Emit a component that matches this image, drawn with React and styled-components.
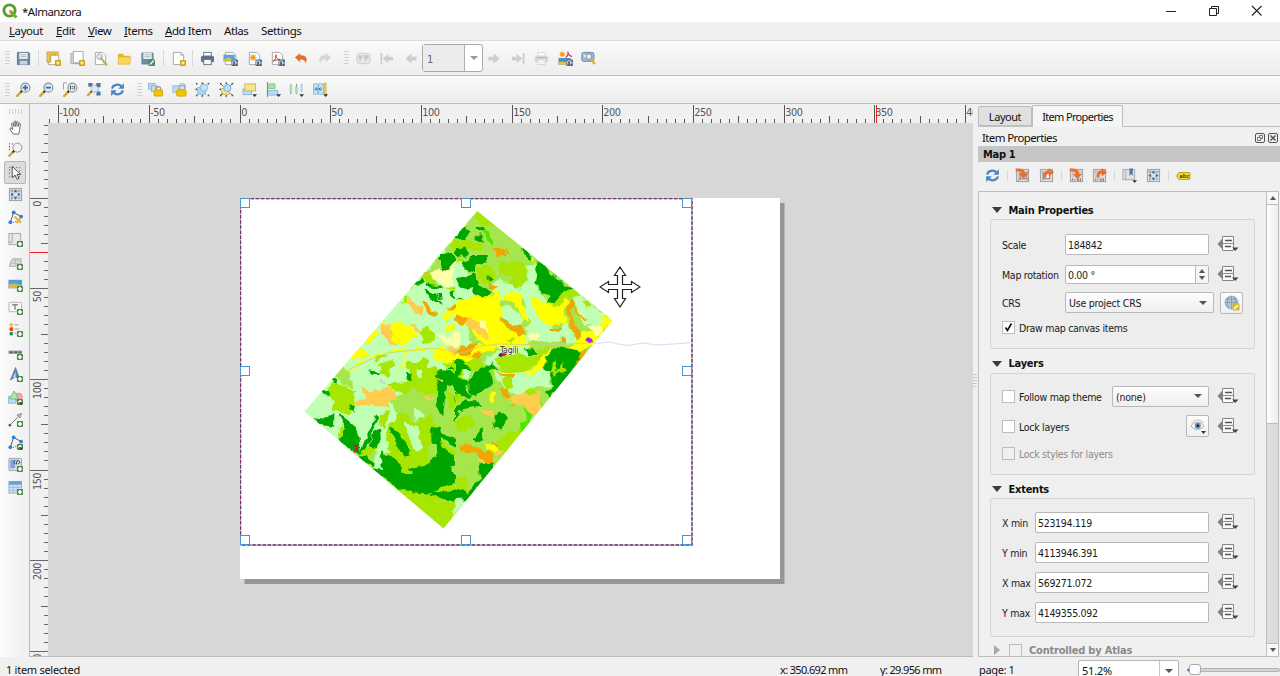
import React from 'react';
import styled, { createGlobalStyle, css } from 'styled-components';

const ui = '"Noto Sans", "Open Sans", sans-serif';
const panelFont = '"DejaVu Sans Condensed", "DejaVu Sans", sans-serif';

const Global = createGlobalStyle`
  html, body { margin: 0; padding: 0; height: 100%; overflow: hidden; }
  *, *::before, *::after { box-sizing: border-box; }
`;

const Window = styled.div`
  width: 1280px;
  height: 676px;
  display: flex;
  flex-direction: column;
  overflow: hidden;
  background: #f0f0f0;
  color: #111;
  font: 10.5px ${panelFont};
  white-space: nowrap;
`;

/* ---------- window chrome ---------- */
const TitleBar = styled.header`
  height: 22px;
  flex: none;
  display: flex;
  align-items: center;
  background: #fff;
  padding-left: 2px;
  font: 11.5px ${ui};
`;
const Title = styled.span`
  flex: 1;
  padding-left: 4px;
  letter-spacing: -0.5px;
`;
const WindowControls = styled.div`
  display: flex;
  width: 131px;
  height: 20px;
`;
const WindowButton = styled.div`
  width: 43px;
  display: flex;
  align-items: center;
  justify-content: center;
`;
const MenuBar = styled.nav`
  height: 19px;
  flex: none;
  display: flex;
  align-items: center;
  padding-bottom: 2px;
  border-bottom: 1px solid #dcdcdc;
  font: 11.5px ${ui};
`;
const MenuItem = styled.span`
  width: ${(p) => p.$w}px;
  letter-spacing: -0.42px;
  padding-left: 9px;
  &::first-letter { text-decoration: ${(p) => (p.$plain ? 'none' : 'underline')}; }
`;

/* ---------- toolbars ---------- */
const ToolBar = styled.div`
  height: ${(p) => p.$h}px;
  flex: none;
  display: flex;
  align-items: center;
  background: linear-gradient(#fafafa, #ededed);
  border-bottom: 1px solid #bdbdbd;
`;
const Tool = styled.div`
  width: 23.5px;
  height: 22px;
  flex: none;
  display: flex;
  align-items: center;
  justify-content: center;
  opacity: ${(p) => (p.$off ? 0.85 : 1)};
`;
const Separator = styled.div`
  width: ${(p) => p.$w || 7}px;
  height: ${(p) => p.$h || 16}px;
  flex: none;
  background: linear-gradient(#d8d8d8, #d8d8d8) center / 1px 100% no-repeat;
`;
const Grip = styled.div`
  width: ${(p) => p.$w}px;
  height: 16px;
  flex: none;
  &::before {
    content: '';
    display: block;
    width: 5px;
    height: 16px;
    margin-left: ${(p) => p.$m}px;
    background: radial-gradient(circle, #c4c4c4 0.7px, transparent 1px) 0 0 / 2.5px 3px;
  }
`;
const SideGrip = styled.div`
  width: 16px;
  height: 5px;
  margin: 5px 0 2px 8px;
  flex: none;
  background: radial-gradient(circle, #c4c4c4 0.7px, transparent 1px) 0 0 / 3px 2.5px;
`;
const PageCombo = styled.div`
  width: 61px;
  height: 28px;
  flex: none;
  display: flex;
  border: 1px solid #a9a9a9;
  border-radius: 3px;
  background: #fff;
  font-size: 11px;
  span {
    flex: 1;
    background: #ececec;
    border-right: 1px solid #b0b0b0;
    padding: 8px 0 0 4px;
    color: #5a6b80;
    line-height: 14px;
  }
`;
const ComboArrow = styled.i`
  width: ${(p) => p.$w || 17}px;
  display: flex;
  align-items: center;
  justify-content: center;
  &::before {
    content: '';
    border: 4px solid transparent;
    border-top: 4px solid ${(p) => p.$c || '#555'};
    border-bottom: 0;
  }
`;

/* ---------- body ---------- */
const Body = styled.div`
  height: 553px;
  flex: none;
  display: flex;
`;
const SideBar = styled.aside`
  width: 30px;
  flex: none;
  background: linear-gradient(90deg, #fbfbfb, #efefef);
  border-right: 1px solid #bcbcbc;
`;
const SideTool = styled.div`
  width: 22px;
  height: 22.5px;
  margin-left: 4px;
  display: flex;
  align-items: center;
  justify-content: center;
  ${(p) => p.$active && css`
    background: #dcdcdc;
    border: 1px solid #b4b4b4;
    border-radius: 2px;
  `}
`;
const View = styled.main`
  width: 943px;
  flex: none;
  display: flex;
  flex-direction: column;
  border-bottom: 1px solid #bcbcbc;
  svg { display: block; }
`;
const ViewRow = styled.div`
  display: flex;
  flex: 1;
  min-height: 0;
`;
const Canvas = styled.div`
  position: relative;
  flex: 1;
  overflow: hidden;
  background: #d7d7d7;
`;
const Paper = styled.div`
  position: absolute;
  left: 192px;
  top: 75px;
  width: 540px;
  height: 381px;
  background: #fff;
  box-shadow: 4.5px 5px 0 #969696;
`;
const MapItem = styled.div`
  position: absolute;
  left: 192px;
  top: 75px;
  width: 453px;
  height: 348px;
`;
const Handle = styled.div`
  position: absolute;
  left: ${(p) => p.$x}px;
  top: ${(p) => p.$y}px;
  width: 10px;
  height: 10px;
  background: #fff;
  border: 1px solid #4a96c8;
`;
const MoveCursor = styled.svg`
  position: absolute;
  left: 551px;
  top: 143px;
`;
const Splitter = styled.div`
  width: 5px;
  flex: none;
  display: flex;
  align-items: center;
  &::before {
    content: '';
    width: 4px;
    height: 16px;
    background: radial-gradient(circle, #c8c8c8 0.7px, transparent 1px) 0 0 / 2px 3px;
  }
`;

/* ---------- right panel ---------- */
const Panel = styled.aside`
  flex: 1;
  min-width: 0;
  display: flex;
  flex-direction: column;
`;
const Tabs = styled.div`
  height: 23px;
  flex: none;
  display: flex;
  align-items: flex-end;
  border-bottom: 1px solid #c2c2c2;
  font: 11px ${ui};
  letter-spacing: -0.65px;
`;
const Tab = styled.div`
  width: ${(p) => p.$w}px;
  height: ${(p) => (p.$active ? 22 : 20)}px;
  margin-bottom: ${(p) => (p.$active ? -1 : 0)}px;
  display: flex;
  align-items: center;
  justify-content: center;
  padding-bottom: ${(p) => (p.$active ? 1 : 0)}px;
  background: ${(p) => (p.$active ? '#f5f5f5' : '#e0e0e0')};
  border: 1px solid #bdbdbd;
  border-bottom: ${(p) => (p.$active ? 0 : 1)}px solid #bdbdbd;
  border-radius: 2px 2px 0 0;
  ${(p) => !p.$active && css`letter-spacing: -0.45px;`}
`;
const DockTitle = styled.div`
  height: 19px;
  flex: none;
  display: flex;
  align-items: center;
  gap: 3px;
  padding: 2px 2px 0 4px;
  font: 11.5px ${ui};
  letter-spacing: -0.62px;
  span { flex: 1; }
`;
const ItemName = styled.div`
  height: 16px;
  flex: none;
  background: #c6c6c6;
  padding-left: 5px;
  font: bold 11px/17px ${panelFont};
  letter-spacing: -0.3px;
`;
const PanelTools = styled.div`
  height: 29px;
  flex: none;
  display: flex;
  align-items: center;
  padding: 0 0 2px 3px;
`;
const ScrollArea = styled.div`
  flex: 1;
  min-height: 0;
  display: flex;
  border: 1px solid #bdbdbd;
  border-right: 0;
  margin-right: 1px;
`;
const ScrollContent = styled.div`
  width: 287px;
  flex: none;
  overflow: hidden;
  padding-left: 11px;
`;
const ScrollBar = styled.div`
  width: 14px;
  border: 1px solid #bdbdbd;
  border-width: 0 1px;
  background: #dcdcdc;
  display: flex;
  flex-direction: column;
  justify-content: space-between;
`;
const ScrollStep = styled.div`
  height: 13px;
  background: #f7f7f7;
  border: 0 solid #bdbdbd;
  border-${(p) => (p.$up ? 'bottom' : 'top')}-width: 1px;
  display: flex;
  align-items: center;
  justify-content: center;
  &::before {
    content: '';
    border: 3.5px solid transparent;
    border-${(p) => (p.$up ? 'bottom' : 'top')}: 4px solid #555;
    border-${(p) => (p.$up ? 'top' : 'bottom')}: 0;
  }
`;
const ScrollThumb = styled.div`
  height: 219px;
  margin-bottom: auto;
  background: linear-gradient(90deg, #fff, #ececec);
  border-bottom: 1px solid #bdbdbd;
`;
const SectionTitle = styled.div`
  height: ${(p) => p.$h}px;
  padding: ${(p) => p.$pt || 0}px 0 0 2px;
  display: flex;
  align-items: center;
  font: bold 11px ${panelFont};
  letter-spacing: ${(p) => (p.$off ? -0.2 : -0.25)}px;
  color: ${(p) => (p.$off ? '#8a8a8a' : '#111')};
`;
const Triangle = styled.i`
  width: ${(p) => (p.$closed ? 17 : 16.5)}px;
  flex: none;
  &::before {
    content: '';
    display: block;
    width: 0;
    border: 5px solid transparent;
    border-top: 6px solid #3c3c3c;
    border-bottom: 0;
    ${(p) => p.$closed && css`
      border: 5px solid transparent;
      border-left: 6px solid #a8a8a8;
      border-right: 0;
      margin-left: 2px;
    `}
  }
`;
const GroupBox = styled.div`
  width: 265px;
  height: ${(p) => p.$h}px;
  padding: ${(p) => p.$pt}px 0 0 11px;
  background: #ededed;
  border: 1px solid #d4d4d4;
  border-radius: 2px;
`;
const Row = styled.div`
  height: ${(p) => p.$h || 30}px;
  display: flex;
  align-items: center;
  color: ${(p) => (p.$off ? '#8c8c8c' : '#1a1a1a')};
`;
const Label = styled.span`
  width: ${(p) => p.$w}px;
  flex: none;
  padding-top: 1px;
  letter-spacing: -0.28px;
`;
const Field = styled.div`
  width: ${(p) => p.$w}px;
  height: ${(p) => p.$h || 21}px;
  flex: none;
  display: flex;
  align-items: stretch;
  background: ${(p) => (p.$button ? 'linear-gradient(#fdfdfd, #efefef)' : '#fff')};
  border: 1px solid #b9b9b9;
  border-radius: 2px;
  span {
    flex: 1;
    padding-left: ${(p) => (p.$button ? 3 : 2)}px;
    line-height: ${(p) => (p.$h || 21) - 1}px;
    letter-spacing: ${(p) => (p.$button ? -0.22 : -0.32)}px;
  }
`;
const Spin = styled.div`
  width: 13px;
  border-left: 1px solid #b9b9b9;
  background: #f5f5f5;
  display: flex;
  flex-direction: column;
  align-items: center;
  justify-content: center;
  gap: 3px;
  &::before, &::after { content: ''; border: 3.5px solid transparent; }
  &::before { border-bottom: 4px solid #555; border-top: 0; }
  &::after { border-top: 4px solid #555; border-bottom: 0; }
`;
const Check = styled.div`
  width: 13px;
  height: 13px;
  flex: none;
  margin-right: ${(p) => p.$gap || 4}px;
  background: ${(p) => (p.$off ? '#f0f0f0' : '#fff')};
  border: 1px solid #bdbdbd;
  svg { display: block; }
`;
const SquareButton = styled.div`
  width: 23px;
  height: 22px;
  flex: none;
  display: flex;
  align-items: center;
  justify-content: center;
  background: linear-gradient(#fdfdfd, #f0f0f0);
  border: 1px solid #b9b9b9;
  border-radius: 2px;
`;
const Gap = styled.div`
  width: ${(p) => p.$w}px;
  flex: none;
`;

/* ---------- status bar ---------- */
const StatusBar = styled.footer`
  height: 19px;
  flex: none;
  display: flex;
  align-items: flex-start;
  overflow: hidden;
  font: 11px/26px ${ui};
  span { flex: none; }
`;
const StatusText = styled.span`
  width: ${(p) => p.$w}px;
  padding-left: 6px;
  letter-spacing: ${(p) => p.$ls}px;
`;
const ZoomCombo = styled.div`
  width: 101px;
  height: 22px;
  margin-top: 3px;
  display: flex;
  background: #fff;
  border: 1px solid #b4b4b4;
  border-radius: 2px;
  span {
    flex: 1;
    padding-left: 3px;
    line-height: 19px;
    letter-spacing: -0.2px;
    border-right: 1px solid #c4c4c4;
  }
`;
const Slider = styled.div`
  width: 93px;
  height: 4px;
  margin: 11px 0 0 8px;
  background: linear-gradient(90deg, #1976d2 8px, #d4d4d4 8px);
  border: 1px solid #b4b4b4;
  border-left: 0;
  border-radius: 2px;
  &::before {
    content: '';
    display: block;
    width: 12px;
    height: 11px;
    margin: -5px 0 0 2px;
    background: #fdfdfd;
    border: 1px solid #a8a8a8;
    border-radius: 3px;
  }
`;

/* ---------- icons, 16 x 16 ---------- */
const plus = <g><rect x="9.500" y="9.500" width="6.500" height="6.500" rx="1" fill="#4d8a4b" /><path d="M12.750 10.600v4.400M10.550 12.800h4.400" stroke="#fff" strokeWidth="1.800" /></g>;
const star = <g><rect x="9.500" y="9.500" width="6.500" height="6.500" rx="1" fill="#c9a30f" /><path d="M12.750 10.400v4.700M10.400 12.750h4.700M11.200 11.200l3 3M14.200 11.200l-3 3" stroke="#fff6b8" strokeWidth=".8" /></g>;
const exp = <g><rect x="9" y="9" width="7" height="7" rx="1" fill="#4a6680" /><path d="M10.300 14.500v-4h3v4M13 12h2v2" stroke="#dbe6ef" strokeWidth=".9" fill="none" /></g>;
const sheet = <path d="M2.500 1.500h8l3 3v10h-11z" fill="#fff" stroke="#a6a6a6" />;
const grid = <g><rect x="1.500" y="1.500" width="13" height="13" fill="#dedede" stroke="#9c9c9c" /><path d="M4 2v12M2 4h12" stroke="#b4b4b4" strokeWidth=".8" /></g>;
const lens = (x) => <g><path d="M6 10 1.300 14.800" stroke="#d3a63a" strokeWidth="2.600" strokeLinecap="round" /><path d="M6.600 9.200 5 11" stroke="#222" strokeWidth="2" /><circle cx="10" cy="6" r="4.800" fill="#dce8f3" stroke="#8b9299" strokeWidth="1.200" />{x}</g>;
const arrowTip = <path d="M11 13h5l-2.500 3z" fill="#333" />;
const curve = (c) => <path d="M6.500 2v2.500C12.500 4 15 7 12.500 13.500 12 10.500 10 9 6.500 9.200V12L1 7z" fill={c} />;
const refresh = <g fill="none" stroke="#4a86c6" strokeWidth="2.400"><path d="M2.300 7C3 2.500 9.500 1.500 12.200 4.800M13.700 9C13 13.500 6.500 14.500 3.800 11.200" /><path d="M14.800 1.200v6h-6zM1.200 14.800v-6h6z" fill="#4a86c6" stroke="none" /></g>;
const lock = <g><path d="M8.500 9V7.500a2.500 2.500 0 0 1 5 0V9" stroke="#9a9a9a" strokeWidth="1.400" fill="none" /><rect x="6.500" y="8.500" width="9" height="6.500" rx="1" fill="#f2c500" stroke="#d4a800" /></g>;
const poly = <g><path d="M2.500 13 6 2.500l8 4.500" fill="none" stroke="#555" /><path d="M2.500 13c5 1 9-2 11.500-6" fill="none" stroke="#777" strokeDasharray="1.500 1" />{[[2.5, 13], [6, 2.5], [14, 7]].map(([x, y]) => <circle key={x} cx={x} cy={y} r="2" fill="#2f7be0" />)}</g>;
const printer = (c, d) => <g><rect x="4" y="1.500" width="8" height="4" fill="#fff" stroke={c} /><rect x="1" y="5" width="14" height="7" rx="2" fill={c} /><rect x="4" y="9" width="8" height="5.500" fill={d} stroke={c} /><path d="M3 7h10" stroke="#222" strokeOpacity=".2" /></g>;
const four = (c) => <g fill={c}><path d="M8 2.500 10 5.500H6zM8 13.500 6 10.500h4zM2.500 8l3-2v4zM13.500 8l-3 2V6z" /><path d="M3.500 3.500h2.500L3.500 6zM12.500 3.500V6L10 3.500zM3.500 12.500V10L6 12.500zM12.500 12.500H10l2.500-2.500z" opacity=".55" /></g>;
const importArrow = <path d="M.5.5C7 0 11 1.500 11 6h3L9 12 4 6h3C7 4.200 4.500 3.200 1 3.700z" fill="#ea6f30" />;
const exportArrow = <path d="M5 10.500C4.500 4.500 7 2.500 10.500 2.500V0L16 4.500 10.500 9V6C8.500 6 7.500 7.500 8 10.500z" fill="#ea6f30" />;
const dots = <g fill="#555">{[[1, 1], [13.5, 1], [1, 13.5], [13.5, 13.5], [7, 0.5], [7, 14], [0.5, 7]].map(([x, y]) => <rect key={`${x}_${y}`} x={x} y={y} width="1.700" height="1.700" />)}</g>;

const icons = {
  save: <g><path d="M1.500 1.500h12l1 1v12h-13z" fill="#6f8aa5" stroke="#61799a" /><rect x="3.500" y="2" width="9" height="6.500" fill="#e9eef2" /><path d="M5 4h6M5 6h6" stroke="#9aa" strokeWidth=".8" /><rect x="4" y="10.500" width="8" height="4" fill="#c9d3dc" /></g>,
  newLayout: <g>{sheet}<path d="M2 1h11v3.500H5V12H1V1z" fill="#e8c54d" stroke="#c0a040" strokeWidth=".8" /><path d="M4 5.500h1.500M4 8h1.500M4 10.500h1.500M7 3v1.500M10 3v1.500" stroke="#9c8024" strokeWidth=".7" />{star}</g>,
  duplicate: <g><path d="M1 2.500h10v11H1z" fill="#d6d6d6" stroke="#a6a6a6" /><path d="M3.500.500h10.500v12H3.500z" fill="#fff" stroke="#a6a6a6" />{star}</g>,
  manager: <g>{sheet}<circle cx="7" cy="6" r="3" fill="#e6e6e6" stroke="#aaa" /><path d="m8 7 5.500 6.500" stroke="#999" strokeWidth="1.600" /><path d="m11 11 4 4" stroke="#d6ac2f" strokeWidth="2.500" /></g>,
  folder: <g><path d="M1 3h5l1.500 2H14v9H1z" fill="#e4b52c" /><path d="M1.500 6.500H15L13.500 14H1z" fill="#f8d55d" stroke="#e0b53c" strokeWidth=".6" /></g>,
  saveAs: <g><path d="M1.500 1.500h12l1 1v12h-13z" fill="#6f8aa5" /><rect x="3.500" y="2" width="9" height="6.500" fill="#e9eef2" /><path d="M5 4h6M5 6h6" stroke="#9aa" strokeWidth=".8" /><rect x="9" y="9" width="7" height="7" rx="1" fill="#4d8a6b" /><path d="m10.500 14.500 4-4" stroke="#fff" strokeWidth="1.500" /></g>,
  addPage: <g>{sheet}<path d="M10.500 1.500v3h3" fill="none" stroke="#a6a6a6" />{star}</g>,
  print: printer('#5d7893', '#f4f7f9'),
  image: <g>{sheet}<rect x=".500" y="4" width="12" height="7" fill="#5ba3dd" /><path d="m.500 11 0-2 5-2 7 2.500V11z" fill="#d8bd45" />{exp}</g>,
  svg: <g>{sheet}<path d="M6.500 3.500v7M3 7h7M4 4.500l5 5M9 4.500l-5 5" stroke="#f49b1c" strokeWidth="1.300" />{exp}</g>,
  pdf: <g>{sheet}<path d="M3 11c2.500-1 4-4.500 3.500-7-1.200 0-.5 4.500 4.500 5.500-2-.5-5 0-8 1.500z" fill="none" stroke="#d42b2b" />{exp}</g>,
  undo: curve('#e5702c'),
  redo: <g transform="matrix(-1 0 0 1 16 0)">{curve('#d3d5d6')}</g>,
  atlas: <g><rect x="1" y="2.500" width="14" height="11" rx="3" fill="#e4e6e7" stroke="#c4c7ca" /><path d="M2.500 5.500 4 4.500l3 .500-.5 2.500L5 8.500l-.5 3L3.500 9zM8 4.500l5 0 .5 3-2 .5-1 3.500L9 8z" fill="#bcc0c3" /></g>,
  first: <path d="M1.500 2h2v12h-2zM15 6v4h-5v3L4 8l6-5v3z" fill="#c6c9cc" />,
  prev: <path d="M14.500 6v4H9v3.500L2.500 8 9 2.500V6z" fill="#c6c9cc" />,
  next: <path d="M1.500 6v4H7v3.500L13.500 8 7 2.500V6z" fill="#c6c9cc" />,
  last: <path d="M12.500 2h2v12h-2zM1 6v4h5v3l6-5-6-5v3z" fill="#c6c9cc" />,
  printOff: printer('#cfd1d3', '#f4f4f4'),
  exportAtlas: <g><path d="M4.500.500v6M1.500 3.500h6M2.500 1.500l4 4M6.500 1.500l-4 4" stroke="#f49b1c" strokeWidth="1.200" /><path d="M8 7c2-1 3-4 2.500-6.500C10.500 3 12 5 15 6" stroke="#e23a3a" strokeWidth="1.300" fill="none" /><rect x=".500" y="7.500" width="13" height="7" fill="#4a90cf" /><path d="M.5 11.500h13v3H.5z" fill="#e3c23e" />{exp}</g>,
  atlasSet: <g><rect x=".8" y="1.500" width="13" height="9.500" rx="2" fill="#9db9d6" stroke="#6d8aa8" /><path d="M2.500 4h3v3h-2z" fill="#dfe9f2" /><circle cx="8.500" cy="6" r="3" fill="#e6eef5" stroke="#7d8c99" /><path d="M10.500 8.500 14.800 14" stroke="#d6b036" strokeWidth="2.500" /></g>,
  zoomIn: lens(<path d="M10 3.200v5.600M7.200 6h5.600" stroke="#3b6ea5" strokeWidth="1.900" />),
  zoomOut: lens(<path d="M7.200 6h5.600" stroke="#3b6ea5" strokeWidth="1.900" />),
  zoomActual: <g><path d="M4.500 1h-4v7" fill="none" stroke="#999" />{lens(<path d="M8 4v4M12 4v4M10 4.500v.8M10 6.800v.8" stroke="#333" />)}</g>,
  zoomFull: <g><path d="M6 10 1.300 14.800" stroke="#d3a63a" strokeWidth="2.600" /><path d="M6.500 9.500 5 11" stroke="#222" strokeWidth="1.500" /><circle cx="9.300" cy="7" r="4" fill="#dfe6ee" stroke="#aab2ba" /><path d="M2.500 1h4.500v1.500L5.500 5h-3zM15.500 1v4.500h-3L11 4V1zM15.500 14.500H11V12l1.500-2h3z" fill="#4c75a3" /></g>,
  refresh,
  lock: <g><rect x=".500" y="1.500" width="7" height="6" fill="#b9dcf3" stroke="#8abadd" /><rect x="3.500" y="4" width="6" height="6" fill="#d6d6d6" stroke="#aaa" />{lock}</g>,
  unlock: <g><rect x="1" y="4" width="8" height="7" fill="#b9dcf3" stroke="#8abadd" /><circle cx="11" cy="5" r="3.500" fill="#cfe4f4" stroke="#9fb9cc" /><path d="M6.500 8.500 8.500 4l4.500-.5 1 5" fill="none" stroke="#aaa" strokeWidth="1.300" /><rect x="5" y="8.500" width="10" height="6.500" rx="1" fill="#f2c500" stroke="#d4a800" /></g>,
  group: <g><rect x="3" y="6" width="8" height="7" fill="#b9dcf3" stroke="#7fb2d8" /><circle cx="9.500" cy="6" r="4" fill="#c6e2f5" stroke="#7fb2d8" />{dots}</g>,
  ungroup: <g><rect x="3" y="7" width="8" height="6" fill="#f5e88a" stroke="#c9b64a" /><circle cx="9" cy="6.500" r="3.800" fill="#b9dcf3" stroke="#7fb2d8" />{dots}<path d="m2 2 3 3M14 2l-2 2M2 14l2-2M14 14l-2-2" stroke="#555" /></g>,
  raise: <g><rect x="1" y="7.500" width="9" height="6" fill="#b9dcf3" stroke="#8abadd" /><rect x="3" y="2" width="11.500" height="7.500" fill="#f3e88c" stroke="#c9b65a" />{arrowTip}</g>,
  align: <g><path d="M1.500 0v16" stroke="#777" /><rect x="3" y="2" width="6.500" height="5" fill="#a9e3a9" stroke="#86c48a" /><rect x="3" y="9" width="9.500" height="5" fill="#b9dcf3" stroke="#8abadd" />{arrowTip}</g>,
  distribute: <g><path d="M2 2v11M8 2v11M13.500 2v9" stroke="#888" /><rect x=".500" y="4" width="3" height="6" fill="#a9e3a9" /><rect x="6.300" y="5" width="3.400" height="7" fill="#a9e3a9" /><rect x="12" y="3" width="3" height="7" fill="#b9dcf3" />{arrowTip}</g>,
  resize: <g><path d="M.5 2h4.500v11H.500zM6 2h5v11H6z" fill="#c6e2f5" stroke="#8abadd" /><path d="M12 1h2v13h-2z" fill="#e7d465" stroke="#b7a438" strokeWidth=".6" /><path d="M1.500 7.500H4M7 7.500h2.500M3 5.800l1.700 1.700L3 9.200M8 5.800 6.300 7.500 8 9.200" stroke="#3b6390" fill="none" />{arrowTip}</g>,
  hand: <path d="M5.500 15C4 12.500 2 10.500 2 9c1-.9 2 0 3 1.200L3.800 4c0-1.300 1.500-1.300 1.800 0L6.500 7V2c0-1.400 1.800-1.400 1.800 0v4.800L9 2.400c.2-1.300 1.900-1 1.800.3L10.600 7l1-3c.4-1.200 1.800-.8 1.600.4L12.500 10c-.2 2.500-.8 3.500-1 5z" fill="#fff" stroke="#555" strokeWidth=".9" />,
  zoom: <g><path d="M1 2h1M4 2h1M1 5h1M1 8h1" stroke="#555" strokeWidth="1.500" /><path d="M6 10 1.500 14.500" stroke="#d3a63a" strokeWidth="2.600" strokeLinecap="round" /><path d="M7 9 5 11" stroke="#222" strokeWidth="2" /><circle cx="10" cy="6" r="4.800" fill="#f2f2f0" stroke="#909090" /></g>,
  select: <g><rect x="1.500" y="2.500" width="11" height="10" fill="none" stroke="#666" strokeDasharray="1.500 2" /><path d="M4.500 1.500v12l3-2.700 2.200 4.500 2-1-2.200-4.300h4z" fill="#fff" stroke="#333" strokeWidth=".9" /></g>,
  moveContent: <g>{grid}{four('#3a6da3')}</g>,
  editNodes: <g>{poly}<path d="m7 7 7 6.500M13 9l-4 5" stroke="#edb51e" strokeWidth="2.200" /></g>,
  addMap: <g><rect x="1" y="1.500" width="12.500" height="12" fill="#e9e9e9" stroke="#a4a4a4" /><path d="M4.500 2v9H1" fill="none" stroke="#a4a4a4" />{plus}</g>,
  add3d: <g><path d="M5 4h9v8H1.500C2.500 8 3 6 5 4z" fill="#ddd" stroke="#a8a8a8" /><path d="M3 9h10M5 6h8M8 4v7" stroke="#bbb" />{plus}</g>,
  addPicture: <g><rect x=".500" y="3" width="14.500" height="9" fill="#4e9fdf" /><path d="M.5 12V8.500C5 6 8 7 15 9v3z" fill="#d8b844" />{plus}</g>,
  addLabel: <g><rect x="1" y="2.500" width="13.500" height="10" rx="1" fill="#f7f7f7" stroke="#b2b2b2" /><path d="M4.500 5h6M7.500 5v5.500" stroke="#888" strokeWidth="1.500" />{plus}</g>,
  addLegend: <g><circle cx="3.500" cy="3" r="2" fill="#f3c01c" /><rect x="1.500" y="5.500" width="4" height="4" rx="1" fill="#e3501f" /><circle cx="3.500" cy="12.500" r="2" fill="#20905a" /><path d="M7 3h4M7 7.500h5M7 12h2" stroke="#999" />{plus}</g>,
  addScale: <g><rect x=".500" y="6" width="14.500" height="3.500" fill="#999" /><path d="M2 7.700h2.500M7 7.700h2.500M12 7.700h2" stroke="#555" strokeWidth="1.500" />{plus}</g>,
  addNorth: <g><path d="M8 .5 13 14 8 10.500 2.500 14z" fill="#5b86b4" stroke="#4a6f96" strokeWidth=".7" /><path d="M8 5v5.500L5 12z" fill="#cfe0ef" />{plus}</g>,
  addShape: <g><rect x=".500" y="7" width="8" height="7" fill="#b9dcf3" stroke="#8abadd" /><circle cx="11" cy="7.500" r="4.200" fill="#f3a9a9" stroke="#dd8c8c" /><path d="M6.500 1 11 9.500H2z" fill="#b4eab0" stroke="#73bb6c" />{plus}{arrowTip}</g>,
  addArrow: <g><path d="M2 14 12.500 3.500" stroke="#777" /><circle cx="2" cy="14" r="1.400" fill="#555" /><path d="m14.500 1.500-1.700 5-3.300-3.300z" fill="#bbb" stroke="#666" strokeWidth=".6" />{plus}</g>,
  addNodes: <g>{poly}{plus}{arrowTip}</g>,
  addHtml: <g><rect x="1" y="1.500" width="13.500" height="13" rx="1" fill="#d4dde5" stroke="#9aa4ae" /><rect x="2.500" y="3" width="5" height="9" fill="#7fa8d0" /><path d="m8 3.500-2 2 2 2M11 3.500l2 2-2 2M10 3 8.800 8" stroke="#333" fill="none" />{plus}</g>,
  addTable: <g><rect x="1" y="1.500" width="13.500" height="12.500" fill="#cfe1f3" stroke="#94b3d2" /><rect x="1" y="1.500" width="13.500" height="3.500" fill="#6a9ed4" /><path d="M1 8h13M1 11h13M5.500 5v9M10 5v9" stroke="#9cbddd" />{plus}</g>,
  setExtent: <g>{grid}<rect x="5.500" y="5.500" width="7" height="6" fill="#f4f4f4" stroke="#777" /><path d="M12.500 5.500l2-2M12.500 11.500l2 2M5.500 11.500l-2 2" stroke="#777" />{importArrow}</g>,
  viewExtent: <g>{grid}<rect x="4.500" y="5.500" width="7" height="6" fill="#f4f4f4" stroke="#777" />{exportArrow}</g>,
  setScale: <g>{grid}<path d="M3 12.500h1.500M6 12.500h1M9.500 11v3M12 11v3" stroke="#555" />{importArrow}</g>,
  viewScale: <g>{grid}<path d="M3 12.500h1.500M6 12.500h1M9.500 11v3M12 11v3" stroke="#555" />{exportArrow}</g>,
  bookmark: <g><path d="M1 1.500h12.500v11H1z" fill="#e2e2e2" stroke="#a2a2a2" /><path d="M4 2v10" stroke="#aaa" /><path d="M8 .5h3.500v8L9.750 6.500 8 8.500z" fill="#4679ad" />{arrowTip}</g>,
  interactive: <g>{grid}{four('#3a6da3')}</g>,
  globe: <g><circle cx="7.500" cy="7.500" r="6.500" fill="#a9c6dd" stroke="#8299ab" strokeWidth=".7" /><path d="M1 7.500h13M2.500 4h10M7.500 1v13M4.500 2C3 6 3 9 4.500 13M10.500 2c1.500 4 1.500 7 0 11" stroke="#7d92a3" strokeWidth=".7" fill="none" /><rect x="8.500" y="8.500" width="7" height="7" rx="1" fill="#dcb82a" /><path d="m10 14 4-4" stroke="#fff" strokeWidth="1.500" /></g>,
  eye: <g><path d="M1 8c3-5 10-5 13 0-3 4.500-10 4.500-13 0z" fill="#f4f4f4" stroke="#aaa" /><circle cx="7.800" cy="7.700" r="3" fill="#5f90c0" /><circle cx="7.800" cy="7.700" r="1.300" fill="#15273a" /><path d="M1.500 5c3-4 9-4 12 0" stroke="#bbb" fill="none" />{arrowTip}</g>,
};

const Icon = ({ name, size = 16 }) => (
  <svg width={size} height={size} viewBox="0 0 16 16">{icons[name]}</svg>
);
const Tools = ({ names, off, size }) => names.map((n) => <Tool key={n} $off={off}><Icon name={n} size={size} /></Tool>);

const LabelTag = () => (
  <svg width="16" height="16" viewBox="0 0 16 16">
    <path d="M4 4.500h10a1 1 0 0 1 1 1v5a1 1 0 0 1-1 1H4L1.500 8z" fill="#f5d737" stroke="#c2a41c" />
    <text x="4.500" y="10" fontSize="5.500" fontWeight="bold" fontFamily="DejaVu Sans Condensed" fill="#5c4c00">abc</text>
  </svg>
);
const Override = () => (
  <svg width="22" height="18" viewBox="0 0 22 18">
    <path d="M6 3v12L.5 9z" fill="#828282" />
    <path d="M5.500 1.500h11v14h-11z" fill="#fafafa" stroke="#858585" />
    <path d="M8 5.500h7M8 11.500h6" stroke="#555" strokeWidth="1.300" />
    <path d="M5.500 8.500h11" stroke="#8a8a8a" />
    <path d="M15 12.500h6.500l-3.200 3.500z" fill="#444" />
  </svg>
);
const Logo = () => (
  <svg width="16" height="16" viewBox="0 0 16 16">
    <circle cx="7.500" cy="7.500" r="5.600" fill="none" stroke="#5a9e2f" strokeWidth="2.900" />
    <path d="M8 8l6.500 6.500" stroke="#6bb02f" strokeWidth="3" />
    <path d="m7 7 3.500.500-3 3z" fill="#f08a24" />
  </svg>
);

/* ---------- rulers ---------- */
const MM = 1.8135;
const steps = Array.from({ length: 120 }, (_, i) => -110 + i * 5);

const HorizontalRuler = () => (
  <svg width="943" height="19" viewBox="30 0 943 19">
    <rect x="30" width="943" height="19" fill="#f0f0f0" />
    {steps.map((v) => {
      const x = Math.floor(240 + v * MM) + 0.5;
      if (x < 48 || x > 970) return null;
      const top = v % 50 === 0 ? 1 : v % 25 === 0 ? 12 : 15;
      return (
        <g key={v}>
          <path d={`M${x} ${top}V19`} stroke="#555" />
          {v % 50 === 0 && <text x={x + 0.8} y="11.500" fontSize="10.800" fontFamily="DejaVu Sans Condensed" letterSpacing="-.5" fill="#555">{v}</text>}
        </g>
      );
    })}
    <path d="M876.500 1V19" stroke="#f02020" />
  </svg>
);
const VerticalRuler = () => (
  <svg width="18" height="533" viewBox="30 123 18 533">
    <rect x="30" y="123" width="18" height="533" fill="#f0f0f0" />
    {steps.map((v) => {
      const y = Math.floor(198 + v * MM) + 0.5;
      if (y < 124 || y > 656) return null;
      const left = v % 50 === 0 ? 30 : v % 25 === 0 ? 41 : 44;
      return (
        <g key={v}>
          <path d={`M${left} ${y}H48`} stroke="#666" />
          {v % 50 === 0 && <text transform={`translate(40.500 ${y + 2.5}) rotate(-90)`} textAnchor="end" fontSize="10.800" fontFamily="DejaVu Sans Condensed" letterSpacing="-.5" fill="#555">{v}</text>}
        </g>
      );
    })}
    <path d="M30 252.500H48" stroke="#f02020" />
  </svg>
);

/* ---------- land cover map ---------- */
const C = {
  d: '#00a600', l: '#a6e600', g: '#a6e64d', m: '#c0ffb4', y: '#ffff00', p: '#ffffa8',
  o: '#f2a600', a: '#ffcc4d', b: '#4de600', v: '#b020ff', r: '#e6004d', s: '#cccccc',
};
const tiles = [
  { x: 300, y: 200, shapes: `
m 0,0 510,0 510,540 0,540
g 375,220 470,110 510,60 510,175 450,185 430,200 385,230
d 466,112 500,74 506,108 490,125
l 440,135 465,115 505,130 500,145 460,150
d 470,145 490,140 510,145 510,165 480,165
d 420,165 455,155 465,180 455,195 450,225 430,220 420,195
l 465,180 490,175 495,205 470,200
d 490,180 510,170 510,215 490,200
l 355,240 375,225 400,230 415,255 385,250
p 390,222 415,205 425,215 455,200 465,178 472,195 455,225 457,262 430,255 410,240
o 372,218 390,215 380,226 368,224
d 345,250 360,240 370,250 355,258
d 375,248 430,257 427,265 380,257
d 370,262 385,270 405,290 425,315 395,297 378,285
d 405,285 425,285 428,298 415,300
d 475,235 510,222 510,260 490,265 475,258
d 450,275 470,270 492,285 485,308 460,292
l 440,260 465,265 455,275
a 325,288 345,300 365,325 372,352 355,345 325,312
o 330,264 342,262 340,267
l 306,292 322,286 322,312 308,310
o 370,308 385,310 390,325 415,340 410,348 385,340
y 478,325 510,315 510,420 495,372 490,345 455,345 440,365 415,352 432,342 445,328
o 435,325 475,312 510,305 510,322 470,328
o 465,350 490,345 500,362 485,382 470,370
y 435,378 460,365 467,395 440,392
m 480,390 510,370 510,430 482,425
y 275,372 300,362 330,375 345,395 357,410 330,425 315,440 280,425 272,395
a 240,372 270,376 278,400 275,420 302,430 270,435 252,410
a 330,373 362,388 362,400 345,390
l 370,380 385,376 405,395 402,418 385,436 365,415 355,400
p 408,398 440,410 475,402 482,432 460,442 430,425
y 400,450 430,442 460,465 510,460 510,485 430,487 402,480
a 435,440 470,445 465,470 445,457
o 470,465 485,438 510,432 510,455 488,472
y 190,425 225,390 238,402 215,420 195,430
y 130,500 165,460 190,445 208,462 180,480 150,480
y 240,368 255,356 262,370
l 225,470 262,462 250,475 228,482
l 240,490 280,480 285,500 260,518 268,540 205,540 235,520 250,508
l 320,475 345,490 370,472 385,480 380,500 412,505 410,530 370,540 330,530 315,500
d 210,508 235,512 235,525 215,528
d 315,520 330,515 335,540 318,540
l 430,492 470,483 510,488 510,512 440,510
d 430,515 450,502 470,512 490,515 510,508 510,540 412,540
g 105,525 130,500 158,520 145,540 105,540
d 92,540 103,528 112,540` },
  { x: 450, y: 200, shapes: `
g 0,130 82,33 270,188 255,255 210,280 120,290 60,290 40,150
m 0,190 30,185 60,225 75,290 0,300
l 82,33 130,75 105,82 80,62 70,50
d 10,114 48,76 55,98 42,125 25,112
d 78,85 98,80 106,92 88,97
d 75,110 95,103 102,125 85,122
b 98,95 115,98 130,132 115,130
o 128,140 150,150 165,150 165,170 142,168
o 168,143 182,155 172,164
d 217,145 245,165 240,176 218,158
y 243,166 256,172 248,182
l 0,118 60,125 100,130 95,155 50,145 5,140
d 20,150 50,138 57,160 25,172 0,162
d 35,185 65,165 110,165 112,190 80,195 78,220 60,212 35,205
d 25,235 50,228 75,220 80,250 100,262 125,280 100,298 65,282 70,258 45,265 25,255
l 148,185 175,190 205,180 232,205 228,235 208,268 178,250 190,228 150,228
m 120,262 148,238 180,250 205,270 232,240 232,212 225,200 258,190 256,255 275,280 300,320 230,300 150,300
l 85,200 122,200 135,222 132,245 110,252 82,240
d 108,226 132,232 120,245
o 115,250 148,262 132,272 118,264
y 0,330 25,300 70,292 120,292 140,270 152,300 158,340 150,360 180,395 225,405 240,432 110,432 80,420 60,360 0,350
m 155,320 190,322 215,355 222,385 180,370 155,350
y 160,300 170,280 205,275 215,292 215,312 238,345 232,372 212,352 200,312 180,305
m 218,290 245,290 262,340 300,372 332,398 332,422 300,428 262,420 230,430 226,385 240,370
y 243,285 300,315 320,325 340,288 355,300 342,330 352,372 330,365 300,378 270,355 250,330
m 365,270 470,345 440,365 400,372 375,320
m 335,372 352,372 365,400 385,430 345,432 330,400
d 263,183 366,268 345,275 325,318 290,312 302,290 275,277 255,245
l 345,272 365,266 390,290 380,296 347,285 327,325 305,318
o 355,295 373,298 366,330 380,385 397,412 378,415 362,390 355,350 350,320
o 368,322 410,355 398,354 375,338
l 392,305 410,300 424,315 405,326
y 445,358 460,342 487,360 430,432 400,447 380,458 335,455 380,430 395,400 430,395
p 412,378 450,372 458,392 440,415 428,398
m 425,358 462,350 450,370 420,378
o 148,342 172,368 215,376 227,400 205,407 160,375
a 30,350 75,355 110,400 112,425 90,402 50,370
o 10,345 50,355 38,372 25,380
m 25,382 60,372 65,427 32,427
p 85,360 105,365 112,395 92,385
p 0,395 25,400 32,432 0,442
y 0,470 60,435 160,425 230,432 240,445 150,442 90,462 40,492 0,500
o 15,465 30,438 82,428 84,437 45,468
o 58,467 97,460 86,474
p 240,395 268,400 260,422 238,420
o 300,384 332,384 332,392 305,391
o 338,408 352,415 348,428 338,422
l 165,412 192,420 185,430
m 100,490 140,450 235,435 240,470 215,520 180,505
l 135,485 160,470 200,455 240,475 280,470 250,500 200,520 165,505
d 223,440 248,450 266,462 240,472
l 262,450 300,435 285,462 265,470
m 240,540 250,510 290,490 300,540
y 205,520 245,512 280,470 300,448 318,445 310,465 270,515 230,522
d 288,472 318,442 350,445 392,452 388,490 350,540 300,535 285,500
l 298,510 315,480 325,512 305,530
l 335,480 350,515 340,525
o 375,500 395,455 410,445 400,478
d 0,482 40,478 62,510 50,540 0,540
l 40,490 90,470 100,500 70,515
d 90,505 130,490 148,512 125,527 112,540 80,540
o 143,513 160,522 197,518 192,530 165,537
s 55,462 60,460 58,465` },
  { x: 300, y: 360, shapes: `
m 0,0 340,0 360,290 100,250 0,170
l 340,0 510,0 510,420 250,420 280,200
g 270,120 300,105 340,88 370,100 415,105 440,80 510,60 510,290 440,260 400,180 350,185 320,165 285,152
y 395,0 510,0 510,10 460,8 400,5
y 130,20 150,0 165,0 205,8 175,20 150,38 140,22
l 240,0 285,0 262,45 235,40 250,22
l 98,65 130,75 165,95 162,130 150,165 100,152 105,122 82,85
g 105,40 130,22 155,38 160,85 130,72
d 60,95 90,93 92,105 68,108
d 95,55 112,55 110,70 98,68
d 208,30 238,38 235,45 212,45
a 185,82 215,95 245,90 268,83 292,98 290,117 270,120 267,145 215,135 185,138 152,134 192,118
l 262,75 300,68 330,65 385,60 400,30 410,100 370,98 340,88 290,95
m 345,25 365,22 372,50 355,55
d 315,40 335,38 332,62 318,60
d 40,175 70,178 85,167 103,163 102,200 60,195
d 115,160 170,200 180,240 182,290 112,240 135,195
l 115,205 130,195 122,235 110,225
d 148,138 165,135 160,155 150,152
l 240,165 270,155 262,178 250,205 240,195
d 230,160 238,175 212,230 192,285 178,280 205,215
l 185,270 205,262 230,262 205,290 190,295
d 215,225 240,205 242,235 220,268 205,258
l 260,200 268,185 310,190 330,230 345,275 325,290
l 255,200 268,210 300,275 330,310 332,352 312,345 300,305 262,250
d 265,198 295,215 328,268 325,292 295,267
m 308,190 355,195 362,272 345,275 325,225
l 358,175 400,165 398,310 335,322 325,295 362,270
m 340,140 372,165 350,180
d 240,270 300,312 330,320 395,312 400,285 395,200 420,205 430,265 470,290 510,285 510,405 400,400 300,390 180,295 200,285 225,305
m 228,268 240,270 246,330 222,325
l 300,300 330,320 332,352 305,340
d 420,220 470,235 480,255 460,262 440,240 425,235
g 450,320 510,290 510,350 460,345
l 400,400 425,382 480,362 490,372 460,390
l 298,388 380,405 410,425 470,425 460,465 430,510
d 385,405 400,400 510,385 510,412 460,425
m 468,420 510,412 455,475
d 405,42 430,30 460,40 500,22 510,60 480,70 438,75 430,165 412,160 415,82
l 440,100 460,110 465,150 445,140
d 465,105 510,90 510,165 490,170 480,135 462,125
a 403,45 427,62 425,72
a 376,104 400,115 380,124
o 480,265 510,253 510,270 488,272
g 380,255 410,250 412,290 385,300
s 232,56 264,66 258,72 235,66
r 158,256 178,252 170,266 178,276 160,280 168,268` },
  { x: 440, y: 360, shapes: `
g 60,0 422,0 422,20 80,420 20,420 30,100
l 0,0 180,0 190,60 150,40 90,30 60,70 60,130 0,100
d 0,80 12,30 45,8 62,30 50,50 85,65 75,90 100,110 60,112 35,90 15,150 0,165
g 15,85 32,75 38,120 20,148
d 85,62 125,22 150,35 160,65 140,85 110,112 85,95
d 0,140 60,135 78,115 125,135 60,150 40,190 0,185
m 60,50 95,5 100,15 80,60
l 45,180 90,160 100,200 60,215
d 165,160 182,150 202,180 185,205 158,208
d 98,235 128,200 130,240 110,250
m 160,40 190,0 230,30 300,10 330,35 332,80 285,78 240,107 200,92
l 160,10 200,0 290,0 260,35 200,40 170,30
y 0,0 100,0 70,20 20,10 0,8
y 238,42 282,22 300,0 322,0 280,42
o 165,35 190,42 228,42 215,57 180,48
l 262,85 285,78 280,110 250,105
d 318,0 424,0 325,122 318,95 338,80 328,20
l 335,18 350,40 375,15 370,38 345,48
o 398,20 412,8 405,24
o 178,86 205,90 208,117 185,108
a 205,115 240,98 300,98 306,130 280,172 250,135 212,127
o 210,135 225,135 222,142
b 250,145 278,165 272,190 235,227 243,192 262,180
b 304,128 314,128 305,142
y 150,95 167,92 160,135 148,135
a 118,150 160,152 160,170 132,165
l 170,245 200,215 240,212 248,228 190,297 172,268
l 185,60 210,45 220,80 200,90
l 0,185 30,220 50,265 0,240
d 0,245 25,258 45,292 20,320 40,352 50,372 0,372
l 0,372 45,385 75,340 85,400 70,385 0,397
d 0,395 70,388 85,405 100,370 135,355 85,420 0,430
d 115,310 165,308 158,330 125,368 118,340
l 40,350 75,345 60,375
o 60,255 110,258 130,277 160,278 162,312 135,305 120,287 90,275 60,268
y 130,245 175,262 165,277 135,272
o 155,246 175,252 172,264
a 115,290 132,295 130,305 118,303
a 165,270 187,272 180,285 165,285
l 0,430 45,420 50,440 10,510 0,505
m 48,420 82,418 38,475` },
];

const LandCover = () => (
  <svg width="453" height="348" viewBox="240 198 453 348">
    <defs>
      <clipPath id="extent"><path d="M477.300 211 612.500 320.500 443.500 528.500 304.500 411.500z" /></clipPath>
      <filter id="ragged" x="0" y="0" width="1" height="1" colorInterpolationFilters="sRGB">
        <feTurbulence type="fractalNoise" baseFrequency="0.11" numOctaves="2" seed="7" result="n" />
        <feDisplacementMap in="SourceGraphic" in2="n" scale="8" xChannelSelector="R" yChannelSelector="G" />
        <feGaussianBlur stdDeviation="0.3" />
      </filter>
      {tiles.map((t, i) => (
        <clipPath id={`tile${i}`} key={t.x + t.y}>
          <rect x={i % 2 ? 455 : 290} y={i < 2 ? 190 : 370} width="180" height={i < 2 ? 180.5 : 180} />
        </clipPath>
      ))}
    </defs>
    <g clipPath="url(#extent)">
      <g filter="url(#ragged)">
        <rect x="290" y="200" width="340" height="340" fill={C.g} />
        {tiles.map((t, i) => (
          <g key={t.x + t.y} clipPath={`url(#tile${i})`}>
            <g transform={`translate(${t.x} ${t.y}) scale(.33333)`}>
              {t.shapes.trim().split('\n').map((row, k) => (
                <polygon key={k} fill={C[row[0]]} points={row.slice(2)} />
              ))}
            </g>
          </g>
        ))}
        <path d="M345 371 367 360 387 352 410 350 433 350 445 345" fill="none" stroke={C.y} strokeWidth="1.800" />
        <path d="M398 372 403 362 405 352" fill="none" stroke={C.y} strokeWidth="1.200" />
      </g>
      <path d="M340 374 367 361 387 353 433 348 463 353 480 346 500 344 540 345 580 343.500 600 343" fill="none" stroke="#c3d08a" strokeWidth=".8" />
      <path d="M585 340l3-3 4 2 1 3-4 1z" fill={C.v} />
    </g>
    <path d="M590 343.500 600 343 610 342 618 344 628 345.500 636 344 644 343 655 345 665 344.500 680 343.500 692 342.500" fill="none" stroke="#cfe1f2" />
    <path d="M498 356l2-3 3 0 4 0-2 2-4 2z" fill="#8a1538" />
    <path d="M502 354h5l-2 2z" fill="#e0104c" />
    <text x="500" y="353" fontSize="8.500" fontFamily="DejaVu Sans Condensed" letterSpacing="-.15" fill="#303030" stroke="#ffffff" strokeOpacity=".6" strokeWidth="1.200" paintOrder="stroke">Tagili</text>
    <rect x="240.500" y="198.500" width="451.500" height="346.500" fill="none" stroke="#8cc4e4" strokeWidth="1.400" />
    <rect x="240.500" y="198.500" width="451.500" height="346.500" fill="none" stroke="#8a2b5c" strokeWidth="1.400" strokeDasharray="3.500 1.600" />
  </svg>
);

const handles = [[192, 75], [413, 75], [634, 75], [192, 243], [634, 243], [192, 412], [413, 412], [634, 412]];

const sideIcons = ['hand', 'zoom', 'select', 'moveContent', 'editNodes', 'addMap', 'add3d', 'addPicture', 'addLabel', 'addLegend', 'addScale', 'addNorth', 'addShape', 'addArrow', 'addNodes', 'addHtml', 'addTable'];

const extents = [['X min', '523194.119'], ['Y min', '4113946.391'], ['X max', '569271.072'], ['Y max', '4149355.092']];

export default function App() {
  return (
    <Window>
      <Global />
      <TitleBar>
        <Logo />
        <Title>*Almanzora</Title>
        <WindowControls>
          <WindowButton><svg width="12" height="12"><path d="M1 6.500h10" stroke="#222" /></svg></WindowButton>
          <WindowButton><svg width="12" height="12" fill="none" stroke="#222"><path d="M1.500 3.500h7v7h-7zM3.500 3.500v-2h7v7h-2" /></svg></WindowButton>
          <WindowButton><svg width="12" height="12"><path d="m1 1 9.500 9.500M10.500 1 1 10.500" stroke="#222" strokeWidth="1.100" /></svg></WindowButton>
        </WindowControls>
      </TitleBar>
      <MenuBar>
        <MenuItem $w={47}>Layout</MenuItem>
        <MenuItem $w={32}>Edit</MenuItem>
        <MenuItem $w={36}>View</MenuItem>
        <MenuItem $w={41}>Items</MenuItem>
        <MenuItem $w={59}>Add Item</MenuItem>
        <MenuItem $w={37} $plain>Atlas</MenuItem>
        <MenuItem $w={60} $plain>Settings</MenuItem>
      </MenuBar>

      <ToolBar $h={35}>
        <Grip $w={11.5} $m={5} />
        <Tools size={15} names={['save']} />
        <Separator />
        <Tools size={15} names={['newLayout', 'duplicate', 'manager', 'folder', 'saveAs']} />
        <Separator />
        <Tools size={15} names={['addPage']} />
        <Separator $w={5.5} />
        <Tools size={15} names={['print', 'image', 'svg', 'pdf', 'undo', 'redo']} />
        <Grip $w={15} $m={7} />
        <Tools off size={15} names={['atlas', 'first', 'prev']} />
        <PageCombo><span>1</span><ComboArrow $c="#999" /></PageCombo>
        <Tools off size={15} names={['next', 'last', 'printOff']} />
        <Tools size={15} names={['exportAtlas', 'atlasSet']} />
      </ToolBar>
      <ToolBar $h={28}>
        <Grip $w={11.5} $m={5} />
        <Tools size={15} names={['zoomIn', 'zoomOut', 'zoomActual', 'zoomFull', 'refresh']} />
        <Grip $w={15} $m={8} />
        <Tools size={15} names={['lock', 'unlock', 'group', 'ungroup', 'raise', 'align', 'distribute', 'resize']} />
      </ToolBar>

      <Body>
        <SideBar>
          <SideGrip />
          {sideIcons.map((n) => <SideTool key={n} $active={n === 'select'}><Icon name={n} size={15} /></SideTool>)}
        </SideBar>
        <View>
          <HorizontalRuler />
          <ViewRow>
            <VerticalRuler />
            <Canvas>
              <Paper />
              <MapItem><LandCover /></MapItem>
              {handles.map(([x, y]) => <Handle key={`${x}-${y}`} $x={x} $y={y} />)}
              <MoveCursor width="42" height="42" viewBox="0 0 42 42">
                <path d="M21 1 26.500 9.500H23.500V18.500H32.500V15.500L41 21 32.500 26.500V23.500H23.500V32.500H26.500L21 41 15.500 32.500H18.500V23.500H9.500V26.500L1 21 9.500 15.500V18.500H18.500V9.500H15.500z" fill="#fff" stroke="#222" strokeWidth="1.200" />
              </MoveCursor>
            </Canvas>
          </ViewRow>
        </View>
        <Splitter />
        <Panel>
          <Tabs>
            <Tab $w={54}>Layout</Tab>
            <Tab $w={91} $active>Item Properties</Tab>
          </Tabs>
          <DockTitle>
            <span>Item Properties</span>
            <svg width="10" height="10" fill="none" stroke="#555"><rect x=".500" y=".500" width="9" height="9" rx="1.500" /><path d="M2.500 4.500h3v3h-3zM4.500 4V2.500h3v3H6" strokeWidth=".8" /></svg>
            <svg width="10" height="10" fill="none" stroke="#555"><rect x=".500" y=".500" width="9" height="9" rx="1.500" /><path d="m2.500 2.500 5 5M7.500 2.500l-5 5" strokeWidth="1.500" /></svg>
          </DockTitle>
          <ItemName>Map 1</ItemName>
          <PanelTools>
            <Tools size={15} names={['refresh']} />
            <Separator $w={6.5} $h={11} />
            <Tools size={15} names={['setExtent', 'viewExtent']} />
            <Separator $w={6.5} $h={11} />
            <Tools size={15} names={['setScale', 'viewScale']} />
            <Separator $w={6.5} $h={11} />
            <Tools size={15} names={['bookmark', 'interactive']} />
            <Separator $w={6.5} $h={11} />
            <Tool><LabelTag /></Tool>
          </PanelTools>
          <ScrollArea>
            <ScrollContent>
              <SectionTitle $h={27} $pt={9}><Triangle />Main Properties</SectionTitle>
              <GroupBox $h={130} $pt={9}>
                <Row>
                  <Label $w={63}>Scale</Label>
                  <Field $w={144}><span>184842</span></Field>
                  <Gap $w={8} /><Override />
                </Row>
                <Row>
                  <Label $w={63}>Map rotation</Label>
                  <Field $w={144} $h={19}><span>0.00 °</span><Spin /></Field>
                  <Gap $w={8} /><Override />
                </Row>
                <Row $h={27}>
                  <Label $w={63}>CRS</Label>
                  <Field $w={149} $button><span>Use project CRS</span><ComboArrow $w={20} /></Field>
                  <Gap $w={6} /><SquareButton><Icon name="globe" /></SquareButton>
                </Row>
                <Row $h={23}>
                  <Check><svg width="11" height="11"><path d="m2.500 5.500 2 3 4-7" fill="none" stroke="#111" strokeWidth="1.700" /></svg></Check>
                  <Label $w={120}>Draw map canvas items</Label>
                </Row>
              </GroupBox>
              <SectionTitle $h={24} $pt={5}><Triangle />Layers</SectionTitle>
              <GroupBox $h={102} $pt={7}>
                <Row>
                  <Check /><Label $w={93}>Follow map theme</Label>
                  <Field $w={97} $button><span>(none)</span><ComboArrow $w={20} /></Field>
                  <Gap $w={8} /><Override />
                </Row>
                <Row>
                  <Check /><Label $w={167}>Lock layers</Label>
                  <SquareButton><Icon name="eye" /></SquareButton>
                  <Gap $w={8} /><Override />
                </Row>
                <Row $h={24} $off>
                  <Check $off /><Label $w={120}>Lock styles for layers</Label>
                </Row>
              </GroupBox>
              <SectionTitle $h={23} $pt={5}><Triangle />Extents</SectionTitle>
              <GroupBox $h={139} $pt={8}>
                {extents.map(([k, v]) => (
                  <Row key={k}>
                    <Label $w={33}>{k}</Label>
                    <Field $w={174}><span>{v}</span></Field>
                    <Gap $w={8} /><Override />
                  </Row>
                ))}
              </GroupBox>
              <SectionTitle $h={26} $off><Triangle $closed /><Check $off $gap={7} />Controlled by Atlas</SectionTitle>
            </ScrollContent>
            <ScrollBar>
              <ScrollStep $up />
              <ScrollThumb />
              <ScrollStep />
            </ScrollBar>
          </ScrollArea>
        </Panel>
      </Body>

      <StatusBar>
        <StatusText $w={774} $ls={-0.27}>1 item selected</StatusText>
        <StatusText $w={100} $ls={-0.65}>x: 350.692 mm</StatusText>
        <StatusText $w={99} $ls={-0.65}>y: 29.956 mm</StatusText>
        <StatusText $w={105} $ls={-0.35}>page: 1</StatusText>
        <ZoomCombo><span>51.2%</span><ComboArrow $w={18} /></ZoomCombo>
        <Slider />
      </StatusBar>
    </Window>
  );
}
